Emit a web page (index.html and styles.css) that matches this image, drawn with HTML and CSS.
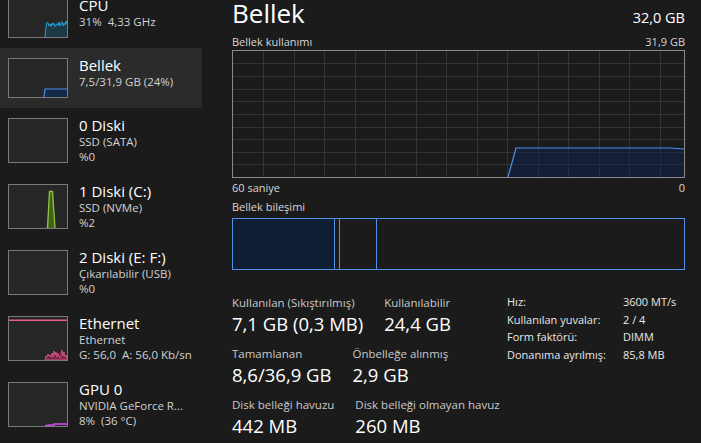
FILE: index.html
```html
<!DOCTYPE html>
<html lang="tr">
<head>
<meta charset="utf-8">
<title>Görev Yöneticisi - Bellek</title>
<link rel="stylesheet" href="styles.css">
</head>
<body>
<div class="app">
  <aside class="sidebar">
    <div class="item item-cpu">
      <div class="thumb">
        <svg viewBox="0 0 58 38" width="58" height="38">
          <path class="cpu-fill" d="M36,38 L37.5,24 L39,23.5 L40,27 L41,25 L42,27.5 L43,24 L44,26 L45,24 L46,27.5 L47,26 L48,24.5 L49,26.5 L50,23 L51,27 L52,25 L53,22.5 L54,27 L55,24 L56,26 L57,22 L58,25 L58,38 Z"/>
          <path class="cpu-line" d="M36,38 L37.5,24 L39,23.5 L40,27 L41,25 L42,27.5 L43,24 L44,26 L45,24 L46,27.5 L47,26 L48,24.5 L49,26.5 L50,23 L51,27 L52,25 L53,22.5 L54,27 L55,24 L56,26 L57,22 L58,25"/>
        </svg>
      </div>
      <div class="info">
        <div class="name">CPU</div>
        <div class="sub">31%&nbsp; 4,33 GHz</div>
      </div>
    </div>
    <div class="item selected">
      <div class="thumb">
        <svg viewBox="0 0 58 38" width="58" height="38">
          <path class="mem-fill" d="M35,38 L36,30 L58,30 L58,38 Z"/>
          <path class="mem-line" d="M35,38 L36,30 L58,30"/>
        </svg>
      </div>
      <div class="info">
        <div class="name">Bellek</div>
        <div class="sub">7,5/31,9 GB (24%)</div>
      </div>
    </div>
    <div class="item tall">
      <div class="thumb"></div>
      <div class="info">
        <div class="name">0 Diski</div>
        <div class="sub">SSD (SATA)</div>
        <div class="sub">%0</div>
      </div>
    </div>
    <div class="item tall">
      <div class="thumb">
        <svg viewBox="0 0 58 43" width="58" height="43">
          <path class="disk-fill" d="M38.5,43 L40.5,6.5 L43.5,6.5 L46,43 Z"/>
          <path class="disk-line" d="M38.5,43 L40.5,6.5 L43.5,6.5 L46,43"/>
        </svg>
      </div>
      <div class="info">
        <div class="name">1 Diski (C:)</div>
        <div class="sub">SSD (NVMe)</div>
        <div class="sub">%2</div>
      </div>
    </div>
    <div class="item tall">
      <div class="thumb"></div>
      <div class="info">
        <div class="name">2 Diski (E: F:)</div>
        <div class="sub">Çıkarılabilir (USB)</div>
        <div class="sub">%0</div>
      </div>
    </div>
    <div class="item tall">
      <div class="thumb">
        <svg viewBox="0 0 58 43" width="58" height="43">
          <path class="eth-line" d="M0,3.2 L58,3.2"/>
          <path class="eth-fill" d="M36,43 L37,39 L38,40 L39,37 L40,39 L41,38 L42,40 L43,36 L44,40 L45,34 L46,38 L47,35 L48,40 L49,36 L50,39 L51,41 L52,37 L53,33 L54,39 L55,35 L56,40 L57,38 L58,41 L58,43 Z"/>
        </svg>
      </div>
      <div class="info">
        <div class="name">Ethernet</div>
        <div class="sub">Ethernet</div>
        <div class="sub">G: 56,0&nbsp; A: 56,0 Kb/sn</div>
      </div>
    </div>
    <div class="item tall">
      <div class="thumb">
        <svg viewBox="0 0 58 43" width="58" height="43">
          <path class="gpu-fill" d="M36,43 L36,42.5 L40,42.5 L40,42 L45,42 L45,41 L58,41 L58,43 Z"/>
          <path class="gpu-line" d="M36,42.5 L40,42.5 L40,42 L45,42 L45,41 L58,41"/>
        </svg>
      </div>
      <div class="info">
        <div class="name">GPU 0</div>
        <div class="sub">NVIDIA GeForce R...</div>
        <div class="sub">8%&nbsp; (36 °C)</div>
      </div>
    </div>
  </aside>

  <main class="main">
    <header class="head">
      <h1 class="title">Bellek</h1>
      <span class="total">32,0 GB</span>
    </header>
    <div class="caption usage-cap"><span>Bellek kullanımı</span><span>31,9 GB</span></div>
    <div class="graph">
      <svg viewBox="0 0 451 126" width="451" height="126">
        <g class="grid">
          <path d="M30.5,0V126 M61.5,0V126 M91.5,0V126 M122.5,0V126 M152.5,0V126 M183.5,0V126 M213.5,0V126 M244.5,0V126 M274.5,0V126 M305.5,0V126 M335.5,0V126 M366.5,0V126 M396.5,0V126 M427.5,0V126"/>
          <path d="M0,12.5H451 M0,25.5H451 M0,38.5H451 M0,50.5H451 M0,63.5H451 M0,76.5H451 M0,88.5H451 M0,101.5H451 M0,113.5H451"/>
        </g>
        <path class="use-fill" d="M275,126 L283,97 L437,97 L451,98 L451,126 Z"/>
        <path class="use-line" d="M275,126 L283,97 L437,97 L451,98"/>
      </svg>
    </div>
    <div class="caption axis"><span>60 saniye</span><span>0</span></div>
    <div class="caption comp-title"><span>Bellek bileşimi</span></div>
    <div class="comp">
      <div class="seg seg-use" style="width:102px"></div>
      <div class="seg" style="width:5px"></div>
      <div class="seg" style="width:37px"></div>
      <div class="seg-free"></div>
    </div>

    <section class="stats">
      <div class="stats-left">
        <div class="stat-row">
          <div class="stat"><div class="label">Kullanılan (Sıkıştırılmış)</div><div class="value">7,1 GB (0,3 MB)</div></div>
          <div class="stat"><div class="label">Kullanılabilir</div><div class="value">24,4 GB</div></div>
        </div>
        <div class="stat-row">
          <div class="stat"><div class="label">Tamamlanan</div><div class="value">8,6/36,9 GB</div></div>
          <div class="stat"><div class="label">Önbelleğe alınmış</div><div class="value">2,9 GB</div></div>
        </div>
        <div class="stat-row">
          <div class="stat"><div class="label">Disk belleği havuzu</div><div class="value">442 MB</div></div>
          <div class="stat"><div class="label">Disk belleği olmayan havuz</div><div class="value">260 MB</div></div>
        </div>
      </div>
      <dl class="specs">
        <dt>Hız:</dt><dd>3600 MT/s</dd>
        <dt>Kullanılan yuvalar:</dt><dd>2 / 4</dd>
        <dt>Form faktörü:</dt><dd>DIMM</dd>
        <dt>Donanıma ayrılmış:</dt><dd>85,8 MB</dd>
      </dl>
    </section>
  </main>
</div>
</body>
</html>
```

FILE: styles.css
```css
html, body {
  margin: 0;
  padding: 0;
}

body {
  background: #1b1b1b;
  color: #ffffff;
  font-family: "Open Sans", "Noto Sans", sans-serif;
  overflow: hidden;
}

.app {
  display: flex;
  width: 701px;
  height: 443px;
  overflow: hidden;
}

/* ---------- sidebar ---------- */
.sidebar {
  width: 202px;
  flex: none;
}

.item {
  display: flex;
  align-items: flex-start;
  gap: 11px;
  padding: 10px 0 10px 8px;
}

.item-cpu {
  margin-top: -12px;
}

.item.tall {
  padding-bottom: 11px;
}

.selected {
  background: #2b2b2b;
}

.thumb {
  flex: none;
  width: 60px;
  height: 40px;
  box-sizing: border-box;
  border: 1px solid #7a7a7a;
  background: #262626;
}

.item.tall .thumb {
  height: 45px;
}

.thumb svg {
  display: block;
}

.info {
  margin: -2.5px 0 -3px;
  white-space: nowrap;
}

.name {
  font-size: 15px;
  line-height: 18px;
  color: #ffffff;
}

.sub {
  font-size: 11.5px;
  line-height: 15px;
  color: #d2d2d2;
}

.cpu-fill { fill: #1c3946; }
.cpu-line { fill: none; stroke: #22a2d4; stroke-width: 1; }
.mem-fill { fill: #14284a; }
.mem-line { fill: none; stroke: #4d90e6; stroke-width: 1.2; }
.disk-fill { fill: #40601b; }
.disk-line { fill: none; stroke: #8cc63e; stroke-width: 1.3; }
.eth-line { fill: none; stroke: #e65a90; stroke-width: 1.4; }
.eth-fill { fill: #7a2a4c; stroke: #e65a90; stroke-width: 0.8; }
.gpu-fill { fill: #3a1e44; }
.gpu-line { fill: none; stroke: #c852de; stroke-width: 1.5; }

/* ---------- main ---------- */
.main {
  flex: 1;
  min-width: 0;
  padding: 0 16px 0 30px;
}

.head {
  display: flex;
  justify-content: space-between;
  align-items: baseline;
  height: 28px;
}

.title {
  margin: 0;
  font-size: 26px;
  font-weight: 400;
  line-height: 26px;
}

.total {
  font-size: 14.5px;
}

.caption {
  display: flex;
  justify-content: space-between;
  font-size: 11px;
  line-height: 14px;
  color: #d6d6d6;
}

.usage-cap {
  margin-top: 7px;
  margin-bottom: 1px;
}

.graph {
  height: 128px;
  box-sizing: border-box;
  border: 1px solid #8a8a8a;
}

.graph svg {
  display: block;
}

.grid path {
  fill: none;
  stroke: #343434;
  stroke-width: 1;
  shape-rendering: crispEdges;
}

.use-fill { fill: #0d2250; fill-opacity: 0.5; }
.use-line { fill: none; stroke: #4d90e6; stroke-width: 1.2; }

.axis {
  margin-top: 3px;
}

.comp-title {
  margin-top: 5px;
}

.comp {
  display: flex;
  margin-top: 4px;
  height: 52px;
  box-sizing: border-box;
  border: 1px solid #4d90e6;
}

.seg {
  flex: none;
  box-sizing: border-box;
  border-right: 1px solid #4d90e6;
}

.seg-use {
  background: #0f1d35;
}

.seg-free {
  flex: 1;
}

/* ---------- stats ---------- */
.stats {
  display: flex;
  align-items: flex-start;
  margin-top: 25px;
}

.stats-left {
  width: 275px;
  flex: none;
}

.stat-row {
  display: flex;
  gap: 21px;
}

.stat-row + .stat-row {
  margin-top: 9px;
}

.label {
  font-size: 11.5px;
  line-height: 16px;
  color: #c9c9c9;
  white-space: nowrap;
}

.value {
  font-size: 18.5px;
  line-height: 26px;
  color: #ffffff;
  white-space: nowrap;
}

.specs {
  display: grid;
  grid-template-columns: 116px auto;
  align-content: start;
  margin: -2px 0 0;
  font-size: 11px;
  line-height: 17.5px;
  color: #e8e8e8;
}

.specs dt,
.specs dd {
  margin: 0;
  white-space: nowrap;
}
```
